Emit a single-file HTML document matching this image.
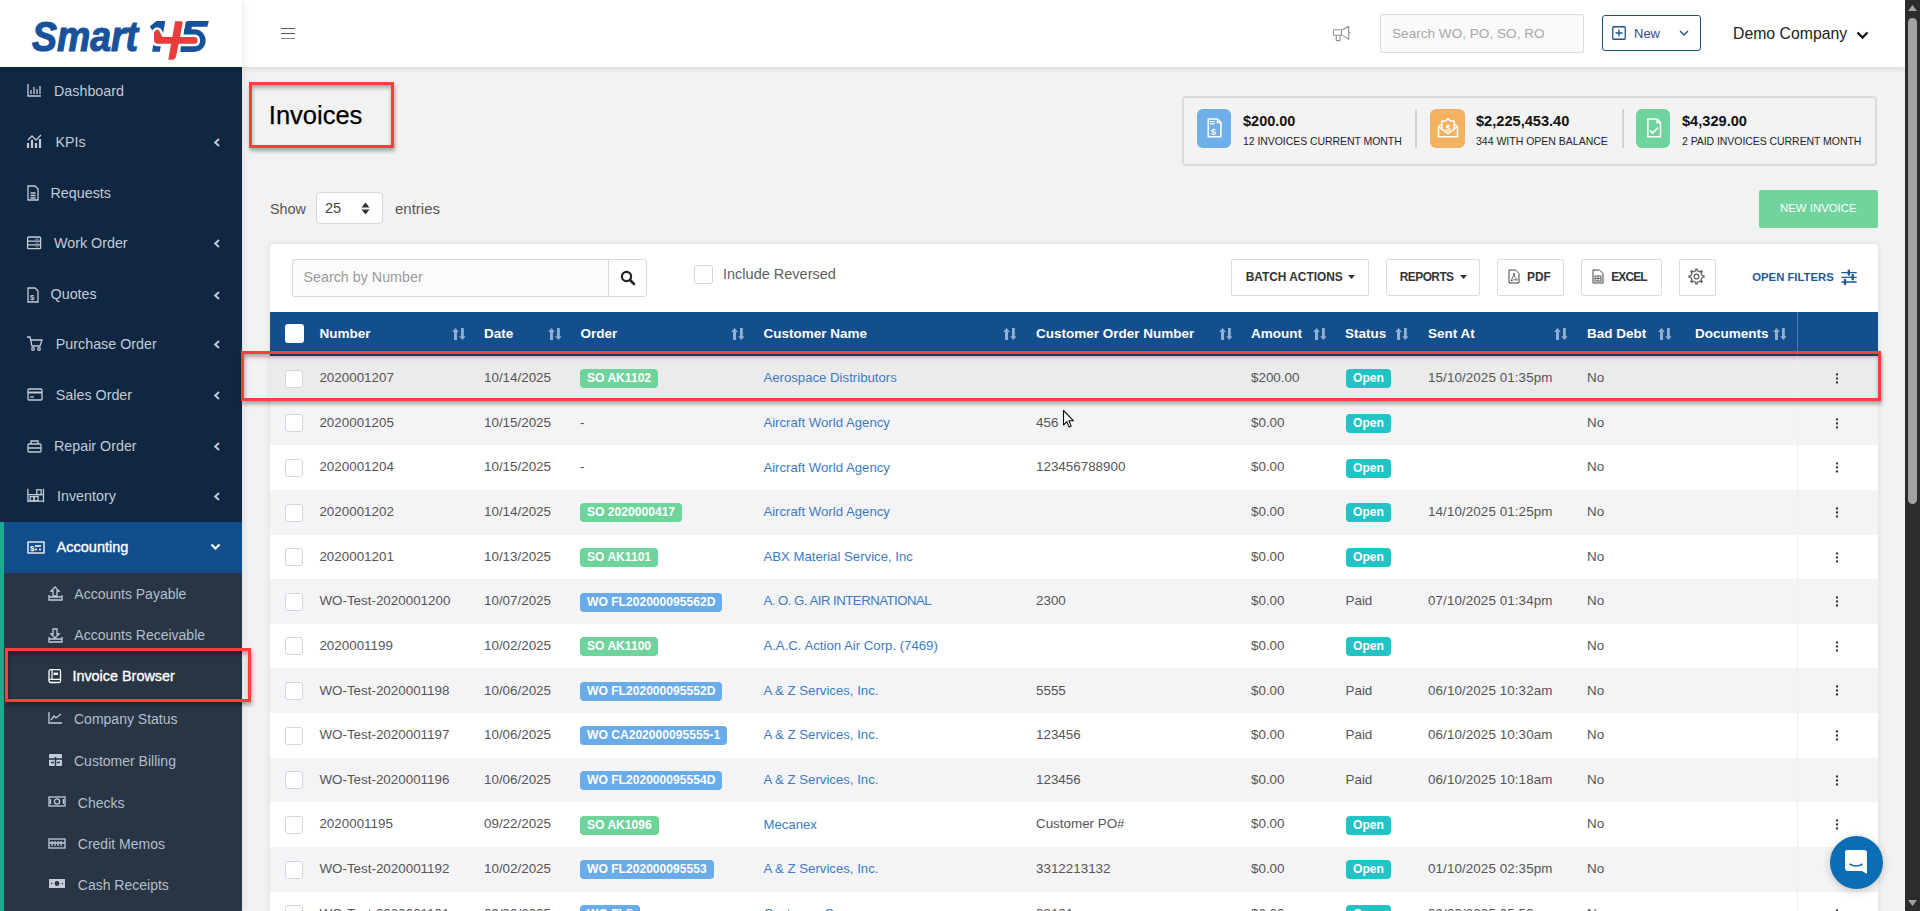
<!DOCTYPE html>
<html><head><meta charset="utf-8"><title>Invoices</title><style>
*{margin:0;padding:0;box-sizing:border-box}
html,body{width:1920px;height:911px;overflow:hidden;background:#f2f2f2;font-family:"Liberation Sans",sans-serif}
.t{position:absolute;white-space:nowrap;line-height:1}
.ic{position:absolute;overflow:visible}
#sb{position:absolute;left:0;top:0;width:242px;height:911px;background:#0f2740;box-shadow:1px 0 9px rgba(0,0,0,0.09)}
#logo{position:absolute;left:0;top:0;width:242px;height:67px;background:#fff}
#hdr{position:absolute;left:242px;top:0;width:1663px;height:67px;background:#fff;box-shadow:0 1px 6px rgba(0,0,0,0.12)}
.sico{position:absolute;top:109px;width:34px;height:39px;border-radius:6px}
.sico svg{position:absolute;left:0;top:0}
#card{position:absolute;left:270px;top:244px;width:1608px;height:700px;background:#fff;border-radius:3px;box-shadow:0 0 7px rgba(0,0,0,0.09)}
.btn{position:absolute;top:259px;height:37px;border:1px solid #dcdcdc;border-radius:2px;background:#fff}
.badge{position:absolute;height:19px;line-height:19px;padding:0 7px;border-radius:4px;color:#fff;font-weight:bold;font-size:12.1px;white-space:nowrap}
.ann{position:absolute;border:3px solid #ff3d3d;box-shadow:0.5px 3px 4px rgba(0,0,0,0.33), inset 0.5px 3px 4px rgba(0,0,0,0.3)}
</style></head>
<body>
<div id="hdr"></div>
<div id="sb"></div>
<div id="logo"></div>
<div class="t" style="left:0px;top:-0.85px;font-size:1px;color:#555;font-weight:normal;"></div>
<svg style="position:absolute;left:0;top:0" width="242" height="67" viewBox="0 0 242 67">
<text x="32" y="50.8" font-family="Liberation Sans" font-weight="bold" font-style="italic" font-size="42.5" fill="#17529a" stroke="#17529a" stroke-width="1.2" textLength="106" lengthAdjust="spacingAndGlyphs">Smart</text>
<path d="M149.9 26.3 L156.5 21 H165.3 L159.8 51.8 H152.1 L156 28.2 L152.4 31 Z" fill="#17529a"/>
<path d="M185.6 22.5 Q186 21 187.8 21 H208.9 L207.3 26.8 H191.9 L190.8 32.5 L183.4 34.8 Z" fill="#17529a"/>
<path d="M184 32.2 H194.35 A8.4 8.4 0 0 1 194.35 49 H180.5" stroke="#17529a" stroke-width="5.8" fill="none"/>
<g stroke="#fff" stroke-width="5" stroke-linejoin="round">
<path d="M155.5 30.5 Q157.5 29 159 30.5 L162.5 37 H194 Q197.5 37 197.5 40.4 Q197.5 43.8 194 43.8 H158 Q154 43.8 154 40 V33 Q154 31.5 155.5 30.5 Z" fill="#fff"/>
<path d="M175.1 21.3 H181 Q183 21.3 182.6 23.5 L176 56.7 Q175 59.8 172 59.8 H168.3 Z" fill="#fff"/>
</g>
<path d="M155.5 30.5 Q157.5 29 159 30.5 L162.5 37 H194 Q197.5 37 197.5 40.4 Q197.5 43.8 194 43.8 H158 Q154 43.8 154 40 V33 Q154 31.5 155.5 30.5 Z" fill="#e93c3c"/>
<path d="M175.1 21.3 H181 Q183 21.3 182.6 23.5 L176 56.7 Q175 59.8 172 59.8 H168.3 Z" fill="#e93c3c"/>
</svg>
<svg class="ic" style="left:27px;top:83px" width="18" height="16" viewBox="0 0 18 16"><path d="M1 1 V13 H14" stroke="#c3cbd6" stroke-width="1.3" fill="none"/><path d="M4 11 V7 M7 11 V4 M10 11 V6 M13 11 V3" stroke="#c3cbd6" stroke-width="1.3" fill="none"/></svg>
<div class="t" style="left:54px;top:83.90px;font-size:14.3px;color:#c3cbd6;font-weight:normal;">Dashboard</div>
<svg class="ic" style="left:27px;top:134px" width="18" height="16" viewBox="0 0 18 16"><path d="M1 14 V9 M5 14 V6 M9 14 V9 M13 14 V5" stroke="#c3cbd6" stroke-width="2.2"/><path d="M1 6 L5 2 L9 6 L14 1" stroke="#c3cbd6" stroke-width="1.3" fill="none"/></svg>
<div class="t" style="left:55.5px;top:134.90px;font-size:14.3px;color:#c3cbd6;font-weight:normal;">KPIs</div>
<svg class="ic" style="left:213px;top:138px" width="8" height="9" viewBox="0 0 8 9"><path d="M6 1 L2.2 4.5 L6 8" stroke="#c3cbd6" stroke-width="2" fill="none"/></svg>
<svg class="ic" style="left:27px;top:185px" width="18" height="16" viewBox="0 0 18 16"><path d="M1 1 H8 L11 4 V15 H1 Z" stroke="#c3cbd6" stroke-width="1.3" fill="none"/><path d="M3.5 8 H8.5 M3.5 10.5 H8.5 M3.5 13 H8.5" stroke="#c3cbd6" stroke-width="1.3" fill="none"/></svg>
<div class="t" style="left:50.5px;top:185.90px;font-size:14.3px;color:#c3cbd6;font-weight:normal;">Requests</div>
<svg class="ic" style="left:27px;top:235px" width="18" height="16" viewBox="0 0 18 16"><rect x="0.6" y="2" width="13" height="11.7" rx="1" stroke="#c3cbd6" stroke-width="1.3" fill="none"/><path d="M0.6 6.2 H13.6 M0.6 9.9 H13.6" stroke="#c3cbd6" stroke-width="1.3" fill="none"/><path d="M8.5 4.1 H11.5 M8.5 8 H11.5 M8.5 11.8 H11.5" stroke="#c3cbd6" stroke-width="1.1" stroke-dasharray="1 1"/></svg>
<div class="t" style="left:54px;top:235.90px;font-size:14.3px;color:#c3cbd6;font-weight:normal;">Work Order</div>
<svg class="ic" style="left:213px;top:239px" width="8" height="9" viewBox="0 0 8 9"><path d="M6 1 L2.2 4.5 L6 8" stroke="#c3cbd6" stroke-width="2" fill="none"/></svg>
<svg class="ic" style="left:27px;top:286.5px" width="18" height="16" viewBox="0 0 18 16"><path d="M1 1 H8 L11 4 V15 H1 Z" stroke="#c3cbd6" stroke-width="1.3" fill="none"/><text x="3" y="13" font-size="8" font-family="Liberation Sans" font-weight="bold" fill="#c3cbd6">$</text></svg>
<div class="t" style="left:50.6px;top:287.40px;font-size:14.3px;color:#c3cbd6;font-weight:normal;">Quotes</div>
<svg class="ic" style="left:213px;top:290.5px" width="8" height="9" viewBox="0 0 8 9"><path d="M6 1 L2.2 4.5 L6 8" stroke="#c3cbd6" stroke-width="2" fill="none"/></svg>
<svg class="ic" style="left:27px;top:336.3px" width="18" height="16" viewBox="0 0 18 16"><path d="M0 1 H3 L5 10 H13 L15 4 H4" stroke="#c3cbd6" stroke-width="1.3" fill="none"/><circle cx="6" cy="13" r="1.3" stroke="#c3cbd6" stroke-width="1.3" fill="none"/><circle cx="12" cy="13" r="1.3" stroke="#c3cbd6" stroke-width="1.3" fill="none"/></svg>
<div class="t" style="left:55.8px;top:337.20px;font-size:14.3px;color:#c3cbd6;font-weight:normal;">Purchase Order</div>
<svg class="ic" style="left:213px;top:340.3px" width="8" height="9" viewBox="0 0 8 9"><path d="M6 1 L2.2 4.5 L6 8" stroke="#c3cbd6" stroke-width="2" fill="none"/></svg>
<svg class="ic" style="left:27px;top:387.2px" width="18" height="16" viewBox="0 0 18 16"><rect x="1" y="2" width="14" height="11" rx="1" stroke="#c3cbd6" stroke-width="1.3" fill="none"/><path d="M1 5.5 H15" stroke="#c3cbd6" stroke-width="2"/><path d="M3 10 H7" stroke="#c3cbd6" stroke-width="1.3" fill="none"/></svg>
<div class="t" style="left:55.8px;top:388.10px;font-size:14.3px;color:#c3cbd6;font-weight:normal;">Sales Order</div>
<svg class="ic" style="left:213px;top:391.2px" width="8" height="9" viewBox="0 0 8 9"><path d="M6 1 L2.2 4.5 L6 8" stroke="#c3cbd6" stroke-width="2" fill="none"/></svg>
<svg class="ic" style="left:27px;top:438px" width="18" height="16" viewBox="0 0 18 16"><rect x="1" y="6" width="13" height="8" rx="1" stroke="#c3cbd6" stroke-width="1.3" fill="none"/><path d="M4 6 V3 H11 V6 M1 10 H14" stroke="#c3cbd6" stroke-width="1.3" fill="none"/></svg>
<div class="t" style="left:54px;top:438.90px;font-size:14.3px;color:#c3cbd6;font-weight:normal;">Repair Order</div>
<svg class="ic" style="left:213px;top:442px" width="8" height="9" viewBox="0 0 8 9"><path d="M6 1 L2.2 4.5 L6 8" stroke="#c3cbd6" stroke-width="2" fill="none"/></svg>
<svg class="ic" style="left:27px;top:488.4px" width="18" height="16" viewBox="0 0 18 16"><path d="M0.9 0.8 V14.3 M16.5 0.8 V14.3 M0.9 6.6 H16.5 M0.9 13.1 H16.5" stroke="#c3cbd6" stroke-width="1.3" fill="none"/><rect x="9.8" y="1.8" width="4.4" height="4.8" stroke="#c3cbd6" stroke-width="1.3" fill="none"/><rect x="3.2" y="8.6" width="3.8" height="4.2" stroke="#c3cbd6" stroke-width="1.3" fill="none"/><rect x="7.3" y="8.6" width="3.8" height="4.2" stroke="#c3cbd6" stroke-width="1.3" fill="none"/></svg>
<div class="t" style="left:57px;top:489.30px;font-size:14.3px;color:#c3cbd6;font-weight:normal;">Inventory</div>
<svg class="ic" style="left:213px;top:492.4px" width="8" height="9" viewBox="0 0 8 9"><path d="M6 1 L2.2 4.5 L6 8" stroke="#c3cbd6" stroke-width="2" fill="none"/></svg>
<div style="position:absolute;left:0;top:522px;width:242px;height:51px;background:#124e8b"></div>
<div style="position:absolute;left:4px;top:573px;width:238px;height:338px;background:#283544"></div>
<div style="position:absolute;left:0;top:522px;width:4px;height:389px;background:#1aad8c"></div>
<svg class="ic" style="left:27px;top:541px" width="18" height="16" viewBox="0 0 18 16"><rect x="1" y="1" width="16" height="11" stroke="#fff" stroke-width="1.3" fill="none"/><text x="3" y="10" font-size="8" font-weight="bold" font-family="Liberation Sans" fill="#fff">$</text><path d="M8 5 H14 M8 8.5 H10 M12 8.5 H14" stroke="#fff" stroke-width="1.3"/></svg>
<div class="t" style="left:56.6px;top:539.73px;font-size:14.5px;color:#fff;font-weight:normal;-webkit-text-stroke:0.35px #fff">Accounting</div>
<svg class="ic" style="left:210px;top:543px" width="11" height="8" viewBox="0 0 11 8"><path d="M1.5 1.5 L5.5 5.5 L9.5 1.5" stroke="#fff" stroke-width="2.2" fill="none"/></svg>
<svg class="ic" style="left:47.5px;top:586.1px" width="18" height="16" viewBox="0 0 18 16"><path d="M7 1 L11 5 H9 V10 H5 V5 H3 Z" stroke="#c3cbd6" stroke-width="1.3" fill="none"/><path d="M1 9 V14 H14 V9 M1 11 H14" stroke="#c3cbd6" stroke-width="1.3" fill="none"/></svg>
<div class="t" style="left:74.3px;top:586.75px;font-size:14px;color:#b5bfcb;font-weight:normal;">Accounts Payable</div>
<svg class="ic" style="left:47.5px;top:627.7px" width="18" height="16" viewBox="0 0 18 16"><path d="M7 10 L11 6 H9 V1 H5 V6 H3 Z" stroke="#c3cbd6" stroke-width="1.3" fill="none"/><path d="M1 9 V14 H14 V9 M1 11 H14" stroke="#c3cbd6" stroke-width="1.3" fill="none"/></svg>
<div class="t" style="left:74.3px;top:628.35px;font-size:14px;color:#b5bfcb;font-weight:normal;">Accounts Receivable</div>
<svg class="ic" style="left:47.5px;top:669.0px" width="18" height="16" viewBox="0 0 18 16"><rect x="1" y="0.7" width="11.5" height="12.8" rx="1.5" stroke="#fff" stroke-width="1.3" fill="none"/><path d="M4 0.7 V10.3 M1 10.3 H12.5" stroke="#fff" stroke-width="1.2"/><rect x="5.5" y="3.6" width="4.5" height="2.4" fill="#fff"/></svg>
<div class="t" style="left:72.4px;top:669.31px;font-size:14.4px;color:#fff;font-weight:normal;-webkit-text-stroke:0.35px #fff">Invoice Browser</div>
<svg class="ic" style="left:47.5px;top:711.0px" width="18" height="16" viewBox="0 0 18 16"><path d="M1 1 V12 H14" stroke="#c3cbd6" stroke-width="1.3" fill="none"/><path d="M3 9 L6 5 L8 7 L13 3" stroke="#c3cbd6" stroke-width="1.3" fill="none"/></svg>
<div class="t" style="left:74px;top:711.65px;font-size:14px;color:#b5bfcb;font-weight:normal;">Company Status</div>
<svg class="ic" style="left:47.5px;top:753.1px" width="18" height="16" viewBox="0 0 18 16"><rect x="1" y="1" width="13" height="12" rx="1" fill="#c3cbd6"/><path d="M1 6 H14 M7.5 4 V13 M3 9.5 H6 M9 9.5 H12" stroke="#283544" stroke-width="1.5"/></svg>
<div class="t" style="left:74px;top:753.75px;font-size:14px;color:#b5bfcb;font-weight:normal;">Customer Billing</div>
<svg class="ic" style="left:47.5px;top:795.0px" width="18" height="16" viewBox="0 0 18 16"><rect x="1" y="2" width="16" height="9" stroke="#c3cbd6" stroke-width="1.3" fill="none"/><circle cx="9" cy="6.5" r="2.6" stroke="#c3cbd6" stroke-width="1.3" fill="none"/><path d="M2.5 4 V9 M15.5 4 V9" stroke="#c3cbd6" stroke-width="1.3" fill="none"/></svg>
<div class="t" style="left:77.8px;top:795.65px;font-size:14px;color:#b5bfcb;font-weight:normal;">Checks</div>
<svg class="ic" style="left:47.5px;top:836.8px" width="18" height="16" viewBox="0 0 18 16"><rect x="1" y="2" width="16" height="9" stroke="#c3cbd6" stroke-width="1.3" fill="none"/><path d="M4 4 V9 M7 4 V9 M10 4 V9 M13 4 V9 M1 6 H17" stroke="#c3cbd6" stroke-width="1.3" fill="none"/></svg>
<div class="t" style="left:77.8px;top:837.45px;font-size:14px;color:#b5bfcb;font-weight:normal;">Credit Memos</div>
<svg class="ic" style="left:47.5px;top:877.4px" width="18" height="16" viewBox="0 0 18 16"><rect x="1" y="2" width="16" height="9" fill="#c3cbd6"/><circle cx="9" cy="6.5" r="2.4" fill="#283544"/><circle cx="3.5" cy="6.5" r="0.8" fill="#283544"/><circle cx="14.5" cy="6.5" r="0.8" fill="#283544"/></svg>
<div class="t" style="left:77.8px;top:878.05px;font-size:14px;color:#b5bfcb;font-weight:normal;">Cash Receipts</div>
<div style="position:absolute;left:281px;top:28px;width:14px;height:1px;background:#555"></div>
<div style="position:absolute;left:281px;top:33px;width:14px;height:1px;background:#555"></div>
<div style="position:absolute;left:281px;top:38px;width:14px;height:1px;background:#888"></div>
<svg class="ic" style="left:1332px;top:25px" width="20" height="17" viewBox="0 0 20 17"><path d="M2 4.8 H9.5 Q12.5 4.5 16.7 1.3 V14.3 Q12.5 11 9.5 10.3 H2 Q1.5 10.3 1.5 9.8 V5.3 Q1.5 4.8 2 4.8 Z M9.5 4.8 V10.3 M4.2 10.3 V15.2 Q4.2 15.6 4.6 15.6 H7.6 Q8 15.6 8 15.2 V10.3" stroke="#909090" stroke-width="1.1" fill="none" stroke-linejoin="round"/><path d="M17.8 7 V8.6" stroke="#909090" stroke-width="1.2"/></svg>
<div style="position:absolute;left:1380px;top:14px;width:204px;height:39px;border:1px solid #dcdcdc;background:#fafafa;border-radius:2px"></div>
<div class="t" style="left:1392px;top:26.99px;font-size:13.6px;color:#a8a8a8;font-weight:normal;">Search WO, PO, SO, RO</div>
<div style="position:absolute;left:1602px;top:15px;width:99px;height:36px;border:1.5px solid #1f4f8a;border-radius:3px;background:#fff"></div>
<svg class="ic" style="left:1612px;top:26px" width="14" height="14" viewBox="0 0 14 14"><rect x="0.75" y="0.75" width="12.5" height="12.5" rx="1" stroke="#1f4f8a" stroke-width="1.3" fill="none"/><path d="M7 3.5 V10.5 M3.5 7 H10.5" stroke="#1f4f8a" stroke-width="1.3"/></svg>
<div class="t" style="left:1634px;top:27.00px;font-size:13px;color:#1f4f8a;font-weight:normal;">New</div>
<svg class="ic" style="left:1679px;top:30px" width="10" height="6" viewBox="0 0 10 6"><path d="M1 1 L5 5 L9 1" stroke="#1f4f8a" stroke-width="1.3" fill="none"/></svg>
<div class="t" style="left:1733px;top:26.13px;font-size:15.8px;color:#222;font-weight:normal;">Demo Company</div>
<svg class="ic" style="left:1856px;top:31px" width="13" height="9" viewBox="0 0 13 9"><path d="M1.5 1.5 L6.5 6.5 L11.5 1.5" stroke="#111" stroke-width="2.3" fill="none"/></svg>
<div class="t" style="left:268.8px;top:102.91px;font-size:25.5px;color:#000;font-weight:normal;-webkit-text-stroke:0.25px #000">Invoices</div>
<div style="position:absolute;left:1182px;top:96px;width:695px;height:70px;border:2px solid #dadada;border-radius:4px;background:#f3f3f3"></div>
<div style="position:absolute;left:1415px;top:109px;width:2px;height:39px;background:#d3d3d3"></div>
<div style="position:absolute;left:1622px;top:109px;width:2px;height:39px;background:#d3d3d3"></div>
<div class="sico" style="left:1197px;background:#6eaeea"><svg width="34" height="39" viewBox="0 0 34 39"><path d="M11.3 10 H20.3 L23.9 13.6 V27.7 H11.3 Z" stroke="#fff" stroke-width="1.6" fill="none" stroke-linejoin="round"/><path d="M20.3 10 V13.6 H23.9" stroke="#fff" stroke-width="1.4" fill="none"/><path d="M13 12.6 H17.7 M13 14.9 H17.7" stroke="#fff" stroke-width="1.4"/><text x="14.6" y="25.6" font-size="9.5" font-weight="bold" font-family="Liberation Sans" fill="#fff" text-anchor="middle" transform="translate(1.9,0)">$</text></svg></div>
<div class="sico" style="left:1430px;width:35px;background:#f4b260"><svg width="35" height="39" viewBox="0 0 35 39"><path d="M8.5 17.5 V27.7 H27.5 V17.5" stroke="#fff" stroke-width="1.6" fill="none" stroke-linejoin="round"/><path d="M8.5 17.5 L18 24.6 L27.5 17.5 L25 15.5 M8.5 17.5 L11 15.5" stroke="#fff" stroke-width="1.5" fill="none" stroke-linejoin="round"/><path d="M11.8 21 V12 H15.5 L18 9.7 L20.5 12 H24.2 V21" stroke="#fff" stroke-width="1.5" fill="none" stroke-linejoin="round"/><text x="18" y="21.5" font-size="8.5" font-weight="bold" font-family="Liberation Sans" fill="#fff" text-anchor="middle">$</text></svg></div>
<div class="sico" style="left:1636px;background:#6fd49b"><svg width="34" height="39" viewBox="0 0 34 39"><path d="M11.8 10 H21 L24.5 13.6 V27.7 H11.8 Z" stroke="#fff" stroke-width="1.6" fill="none" stroke-linejoin="round"/><path d="M21 10 V13.6 H24.5" stroke="#fff" stroke-width="1.4" fill="none"/><path d="M14 21.4 L16.7 24 L22 18.5" stroke="#fff" stroke-width="1.6" fill="none"/></svg></div>
<div class="t" style="left:1243px;top:113.73px;font-size:14.5px;color:#111;font-weight:bold;">$200.00</div>
<div class="t" style="left:1243px;top:136.11px;font-size:10.5px;color:#1e1e28;font-weight:normal;letter-spacing:-0.06px">12 INVOICES CURRENT MONTH</div>
<div class="t" style="left:1476px;top:113.64px;font-size:14.6px;color:#111;font-weight:bold;">$2,225,453.40</div>
<div class="t" style="left:1476px;top:136.11px;font-size:10.5px;color:#1e1e28;font-weight:normal;">344 WITH OPEN BALANCE</div>
<div class="t" style="left:1682px;top:113.64px;font-size:14.6px;color:#111;font-weight:bold;">$4,329.00</div>
<div class="t" style="left:1682px;top:136.11px;font-size:10.5px;color:#1e1e28;font-weight:normal;letter-spacing:-0.06px">2 PAID INVOICES CURRENT MONTH</div>
<div class="t" style="left:270px;top:201.81px;font-size:14.4px;color:#555;font-weight:normal;">Show</div>
<div style="position:absolute;left:316px;top:192px;width:67px;height:32px;border:1px solid #d6d6d6;border-radius:4px;background:#fff"></div>
<div class="t" style="left:325px;top:200.73px;font-size:14.5px;color:#444;font-weight:normal;">25</div>
<svg class="ic" style="left:361px;top:202px" width="9" height="13" viewBox="0 0 9 13"><path d="M0.5 5.5 L4.5 0.5 L8.5 5.5 Z M0.5 7.5 L4.5 12.5 L8.5 7.5 Z" fill="#333"/></svg>
<div class="t" style="left:395px;top:201.30px;font-size:15px;color:#555;font-weight:normal;">entries</div>
<div style="position:absolute;left:1759px;top:190px;width:119px;height:38px;background:#70d49b;border-radius:2px"></div>
<div class="t" style="left:1780px;top:203.35px;font-size:11.4px;color:#fff;font-weight:normal;">NEW INVOICE</div>
<div id="card"></div>
<div style="position:absolute;left:292px;top:259px;width:317px;height:38px;border:1px solid #d9d9d9;border-right:none;border-radius:3px 0 0 3px;background:#fbfbfb"></div>
<div style="position:absolute;left:608px;top:259px;width:39px;height:38px;border:1px solid #d9d9d9;border-radius:0 3px 3px 0;background:#fff"></div>
<div class="t" style="left:303.5px;top:269.90px;font-size:14.3px;color:#9a9a9a;font-weight:normal;">Search by Number</div>
<svg class="ic" style="left:620px;top:270px" width="16" height="16" viewBox="0 0 16 16"><circle cx="6.5" cy="6.5" r="4.6" stroke="#222" stroke-width="2.2" fill="none"/><path d="M10 10 L14 14" stroke="#222" stroke-width="2.6" stroke-linecap="round"/></svg>
<div style="position:absolute;left:694px;top:265px;width:19px;height:19px;border:1px solid #cfd5dc;border-radius:3px;background:#fff"></div>
<div class="t" style="left:723px;top:266.73px;font-size:14.5px;color:#5f5f5f;font-weight:normal;">Include Reversed</div>
<div class="btn" style="left:1231px;width:138px"></div><div class="t" style="left:1245.7px;top:271.93px;font-size:11.9px;color:#333;font-weight:bold;letter-spacing:0px">BATCH ACTIONS</div><svg class="ic" style="left:1348px;top:275px" width="7" height="4" viewBox="0 0 7 4"><path d="M0 0 H7 L3.5 4 Z" fill="#333"/></svg>
<div class="btn" style="left:1386px;width:94px"></div><div class="t" style="left:1399.8px;top:271.93px;font-size:11.9px;color:#333;font-weight:bold;letter-spacing:-0.54px">REPORTS</div><svg class="ic" style="left:1460px;top:275px" width="7" height="4" viewBox="0 0 7 4"><path d="M0 0 H7 L3.5 4 Z" fill="#333"/></svg>
<div class="btn" style="left:1497px;width:67px"></div><div class="t" style="left:1527px;top:271.93px;font-size:11.9px;color:#333;font-weight:bold;letter-spacing:0px">PDF</div><svg class="ic" style="left:1508px;top:269px" width="12" height="15" viewBox="0 0 12 15"><path d="M1 1 H7.5 L11 4.5 V14 H1 Z" stroke="#444" stroke-width="1" fill="none"/><path d="M3 12 Q6 6 6 4 Q6 9 9.5 11 Q5 10 3 12" stroke="#444" stroke-width="0.8" fill="none"/></svg>
<div class="btn" style="left:1581px;width:81px"></div><div class="t" style="left:1611.2px;top:271.93px;font-size:11.9px;color:#333;font-weight:bold;letter-spacing:-0.8px">EXCEL</div><svg class="ic" style="left:1592px;top:269px" width="12" height="15" viewBox="0 0 12 15"><path d="M1 1 H7.5 L11 4.5 V14 H1 Z" stroke="#444" stroke-width="1" fill="none"/><rect x="3" y="7" width="6" height="5" stroke="#444" stroke-width="0.9" fill="none"/><path d="M3 9.5 H9 M6 7 V12" stroke="#444" stroke-width="0.8"/></svg>
<div class="btn" style="left:1679px;width:37px"></div>
<svg class="ic" style="left:1688px;top:268px" width="17" height="17" viewBox="0 0 17 17"><path d="M14.04 7.71 L16.07 7.78 L16.07 9.22 L14.04 9.29 L13.67 10.64 L12.98 11.86 L14.36 13.34 L13.34 14.36 L11.86 12.98 L10.64 13.67 L9.29 14.04 L9.22 16.07 L7.78 16.07 L7.71 14.04 L6.36 13.67 L5.14 12.98 L3.66 14.36 L2.64 13.34 L4.02 11.86 L3.33 10.64 L2.96 9.29 L0.93 9.22 L0.93 7.78 L2.96 7.71 L3.33 6.36 L4.02 5.14 L2.64 3.66 L3.66 2.64 L5.14 4.02 L6.36 3.33 L7.71 2.96 L7.78 0.93 L9.22 0.93 L9.29 2.96 L10.64 3.33 L11.86 4.02 L13.34 2.64 L14.36 3.66 L12.98 5.14 L13.67 6.36 Z" stroke="#555" stroke-width="1.1" fill="none" stroke-linejoin="round"/><circle cx="8.5" cy="8.5" r="2.4" stroke="#555" stroke-width="1.1" fill="none"/></svg>
<div class="t" style="left:1752.3px;top:272.43px;font-size:11.3px;color:#1f5a96;font-weight:bold;">OPEN FILTERS</div>
<svg class="ic" style="left:1840px;top:268px" width="18" height="17" viewBox="0 0 18 17"><path d="M1.4 4.6 H16.7 M1.4 9.3 H16.7 M1.4 14 H16.7" stroke="#1f5a96" stroke-width="1.3"/><path d="M8.8 2.6 V6.6 M12.7 7.3 V11.3 M5 12 V16" stroke="#1f5a96" stroke-width="2.4" stroke-linecap="round"/></svg>
<div style="position:absolute;left:270px;top:312px;width:1608px;height:44px;background:#134f8d"></div>
<div style="position:absolute;left:1797px;top:312px;width:1px;height:44px;background:rgba(255,255,255,0.25)"></div>
<div style="position:absolute;left:285px;top:324px;width:19px;height:19px;background:#fff;border-radius:3px"></div>
<div class="t" style="left:319.5px;top:326.57px;font-size:13.5px;color:#fff;font-weight:bold;">Number</div>
<svg class="ic" style="left:451.5px;top:327px" width="14" height="14" viewBox="0 0 14 14"><path d="M0.2 4.9 L3.5 1 L6.8 4.9 H5 V13 H2 V4.9 Z" fill="#93afd0"/><path d="M9 1 H11.8 V9.3 H13.6 L10.4 13 L7.2 9.3 H9 Z" fill="#93afd0"/></svg>
<div class="t" style="left:484px;top:326.57px;font-size:13.5px;color:#fff;font-weight:bold;">Date</div>
<svg class="ic" style="left:548px;top:327px" width="14" height="14" viewBox="0 0 14 14"><path d="M0.2 4.9 L3.5 1 L6.8 4.9 H5 V13 H2 V4.9 Z" fill="#93afd0"/><path d="M9 1 H11.8 V9.3 H13.6 L10.4 13 L7.2 9.3 H9 Z" fill="#93afd0"/></svg>
<div class="t" style="left:580.4px;top:326.57px;font-size:13.5px;color:#fff;font-weight:bold;">Order</div>
<svg class="ic" style="left:731px;top:327px" width="14" height="14" viewBox="0 0 14 14"><path d="M0.2 4.9 L3.5 1 L6.8 4.9 H5 V13 H2 V4.9 Z" fill="#93afd0"/><path d="M9 1 H11.8 V9.3 H13.6 L10.4 13 L7.2 9.3 H9 Z" fill="#93afd0"/></svg>
<div class="t" style="left:763.5px;top:326.57px;font-size:13.5px;color:#fff;font-weight:bold;">Customer Name</div>
<svg class="ic" style="left:1003px;top:327px" width="14" height="14" viewBox="0 0 14 14"><path d="M0.2 4.9 L3.5 1 L6.8 4.9 H5 V13 H2 V4.9 Z" fill="#93afd0"/><path d="M9 1 H11.8 V9.3 H13.6 L10.4 13 L7.2 9.3 H9 Z" fill="#93afd0"/></svg>
<div class="t" style="left:1036px;top:326.57px;font-size:13.5px;color:#fff;font-weight:bold;">Customer Order Number</div>
<svg class="ic" style="left:1219px;top:327px" width="14" height="14" viewBox="0 0 14 14"><path d="M0.2 4.9 L3.5 1 L6.8 4.9 H5 V13 H2 V4.9 Z" fill="#93afd0"/><path d="M9 1 H11.8 V9.3 H13.6 L10.4 13 L7.2 9.3 H9 Z" fill="#93afd0"/></svg>
<div class="t" style="left:1251px;top:326.57px;font-size:13.5px;color:#fff;font-weight:bold;">Amount</div>
<svg class="ic" style="left:1313px;top:327px" width="14" height="14" viewBox="0 0 14 14"><path d="M0.2 4.9 L3.5 1 L6.8 4.9 H5 V13 H2 V4.9 Z" fill="#93afd0"/><path d="M9 1 H11.8 V9.3 H13.6 L10.4 13 L7.2 9.3 H9 Z" fill="#93afd0"/></svg>
<div class="t" style="left:1345px;top:326.57px;font-size:13.5px;color:#fff;font-weight:bold;">Status</div>
<svg class="ic" style="left:1395px;top:327px" width="14" height="14" viewBox="0 0 14 14"><path d="M0.2 4.9 L3.5 1 L6.8 4.9 H5 V13 H2 V4.9 Z" fill="#93afd0"/><path d="M9 1 H11.8 V9.3 H13.6 L10.4 13 L7.2 9.3 H9 Z" fill="#93afd0"/></svg>
<div class="t" style="left:1428px;top:326.57px;font-size:13.5px;color:#fff;font-weight:bold;">Sent At</div>
<svg class="ic" style="left:1554px;top:327px" width="14" height="14" viewBox="0 0 14 14"><path d="M0.2 4.9 L3.5 1 L6.8 4.9 H5 V13 H2 V4.9 Z" fill="#93afd0"/><path d="M9 1 H11.8 V9.3 H13.6 L10.4 13 L7.2 9.3 H9 Z" fill="#93afd0"/></svg>
<div class="t" style="left:1587px;top:326.57px;font-size:13.5px;color:#fff;font-weight:bold;">Bad Debt</div>
<svg class="ic" style="left:1658px;top:327px" width="14" height="14" viewBox="0 0 14 14"><path d="M0.2 4.9 L3.5 1 L6.8 4.9 H5 V13 H2 V4.9 Z" fill="#93afd0"/><path d="M9 1 H11.8 V9.3 H13.6 L10.4 13 L7.2 9.3 H9 Z" fill="#93afd0"/></svg>
<div class="t" style="left:1695px;top:326.57px;font-size:13.5px;color:#fff;font-weight:bold;">Documents</div>
<svg class="ic" style="left:1773px;top:327px" width="14" height="14" viewBox="0 0 14 14"><path d="M0.2 4.9 L3.5 1 L6.8 4.9 H5 V13 H2 V4.9 Z" fill="#93afd0"/><path d="M9 1 H11.8 V9.3 H13.6 L10.4 13 L7.2 9.3 H9 Z" fill="#93afd0"/></svg>
<div style="position:absolute;left:270px;top:356.00px;width:1608px;height:45.14px;background:#ebebeb"></div>
<div style="position:absolute;left:285px;top:369.60px;width:18px;height:18px;border:1px solid #cfd6de;border-radius:3px;background:#fff"></div>
<div class="t" style="left:319.4px;top:371.06px;font-size:13.4px;color:#555;font-weight:normal;">2020001207</div>
<div class="t" style="left:484px;top:371.06px;font-size:13.4px;color:#555;font-weight:normal;">10/14/2025</div>
<div class="badge" style="left:580px;top:369.30px;background:#6fd49b">SO AK1102</div>
<div class="t" style="left:763.4px;top:371.23px;font-size:13.2px;color:#3c7bc4;font-weight:normal;">Aerospace Distributors</div>
<div class="t" style="left:1251px;top:371.06px;font-size:13.4px;color:#555;font-weight:normal;">$200.00</div>
<div class="badge" style="left:1346px;top:369.30px;background:#22c3c4">Open</div>
<div class="t" style="left:1428px;top:371.06px;font-size:13.4px;color:#555;font-weight:normal;letter-spacing:0.09px">15/10/2025 01:35pm</div>
<div class="t" style="left:1587px;top:371.06px;font-size:13.4px;color:#555;font-weight:normal;">No</div>
<svg class="ic" style="left:1835px;top:373.00px" width="4" height="12" viewBox="0 0 4 12"><circle cx="2" cy="1.5" r="1.15" fill="#333"/><circle cx="2" cy="5.5" r="1.15" fill="#333"/><circle cx="2" cy="9.5" r="1.15" fill="#333"/></svg>
<div style="position:absolute;left:270px;top:400.64px;width:1608px;height:45.14px;background:#f4f4f6"></div>
<div style="position:absolute;left:285px;top:414.24px;width:18px;height:18px;border:1px solid #cfd6de;border-radius:3px;background:#fff"></div>
<div class="t" style="left:319.4px;top:415.70px;font-size:13.4px;color:#555;font-weight:normal;">2020001205</div>
<div class="t" style="left:484px;top:415.70px;font-size:13.4px;color:#555;font-weight:normal;">10/15/2025</div>
<div class="t" style="left:580px;top:415.70px;font-size:13.4px;color:#555;font-weight:normal;">-</div>
<div class="t" style="left:763.4px;top:415.87px;font-size:13.2px;color:#3c7bc4;font-weight:normal;">Aircraft World Agency</div>
<div class="t" style="left:1036px;top:415.70px;font-size:13.4px;color:#555;font-weight:normal;">456</div>
<div class="t" style="left:1251px;top:415.70px;font-size:13.4px;color:#555;font-weight:normal;">$0.00</div>
<div class="badge" style="left:1346px;top:413.94px;background:#22c3c4">Open</div>
<div class="t" style="left:1587px;top:415.70px;font-size:13.4px;color:#555;font-weight:normal;">No</div>
<svg class="ic" style="left:1835px;top:417.64px" width="4" height="12" viewBox="0 0 4 12"><circle cx="2" cy="1.5" r="1.15" fill="#333"/><circle cx="2" cy="5.5" r="1.15" fill="#333"/><circle cx="2" cy="9.5" r="1.15" fill="#333"/></svg>
<div style="position:absolute;left:270px;top:445.28px;width:1608px;height:45.14px;background:#fff"></div>
<div style="position:absolute;left:285px;top:458.88px;width:18px;height:18px;border:1px solid #cfd6de;border-radius:3px;background:#fff"></div>
<div class="t" style="left:319.4px;top:460.34px;font-size:13.4px;color:#555;font-weight:normal;">2020001204</div>
<div class="t" style="left:484px;top:460.34px;font-size:13.4px;color:#555;font-weight:normal;">10/15/2025</div>
<div class="t" style="left:580px;top:460.34px;font-size:13.4px;color:#555;font-weight:normal;">-</div>
<div class="t" style="left:763.4px;top:460.51px;font-size:13.2px;color:#3c7bc4;font-weight:normal;">Aircraft World Agency</div>
<div class="t" style="left:1036px;top:460.34px;font-size:13.4px;color:#555;font-weight:normal;">123456788900</div>
<div class="t" style="left:1251px;top:460.34px;font-size:13.4px;color:#555;font-weight:normal;">$0.00</div>
<div class="badge" style="left:1346px;top:458.58px;background:#22c3c4">Open</div>
<div class="t" style="left:1587px;top:460.34px;font-size:13.4px;color:#555;font-weight:normal;">No</div>
<svg class="ic" style="left:1835px;top:462.28px" width="4" height="12" viewBox="0 0 4 12"><circle cx="2" cy="1.5" r="1.15" fill="#333"/><circle cx="2" cy="5.5" r="1.15" fill="#333"/><circle cx="2" cy="9.5" r="1.15" fill="#333"/></svg>
<div style="position:absolute;left:270px;top:489.92px;width:1608px;height:45.14px;background:#f4f4f6"></div>
<div style="position:absolute;left:285px;top:503.52px;width:18px;height:18px;border:1px solid #cfd6de;border-radius:3px;background:#fff"></div>
<div class="t" style="left:319.4px;top:504.98px;font-size:13.4px;color:#555;font-weight:normal;">2020001202</div>
<div class="t" style="left:484px;top:504.98px;font-size:13.4px;color:#555;font-weight:normal;">10/14/2025</div>
<div class="badge" style="left:580px;top:503.22px;background:#6fd49b">SO 2020000417</div>
<div class="t" style="left:763.4px;top:505.15px;font-size:13.2px;color:#3c7bc4;font-weight:normal;">Aircraft World Agency</div>
<div class="t" style="left:1251px;top:504.98px;font-size:13.4px;color:#555;font-weight:normal;">$0.00</div>
<div class="badge" style="left:1346px;top:503.22px;background:#22c3c4">Open</div>
<div class="t" style="left:1428px;top:504.98px;font-size:13.4px;color:#555;font-weight:normal;letter-spacing:0.09px">14/10/2025 01:25pm</div>
<div class="t" style="left:1587px;top:504.98px;font-size:13.4px;color:#555;font-weight:normal;">No</div>
<svg class="ic" style="left:1835px;top:506.92px" width="4" height="12" viewBox="0 0 4 12"><circle cx="2" cy="1.5" r="1.15" fill="#333"/><circle cx="2" cy="5.5" r="1.15" fill="#333"/><circle cx="2" cy="9.5" r="1.15" fill="#333"/></svg>
<div style="position:absolute;left:270px;top:534.56px;width:1608px;height:45.14px;background:#fff"></div>
<div style="position:absolute;left:285px;top:548.16px;width:18px;height:18px;border:1px solid #cfd6de;border-radius:3px;background:#fff"></div>
<div class="t" style="left:319.4px;top:549.62px;font-size:13.4px;color:#555;font-weight:normal;">2020001201</div>
<div class="t" style="left:484px;top:549.62px;font-size:13.4px;color:#555;font-weight:normal;">10/13/2025</div>
<div class="badge" style="left:580px;top:547.86px;background:#6fd49b">SO AK1101</div>
<div class="t" style="left:763.4px;top:549.79px;font-size:13.2px;color:#3c7bc4;font-weight:normal;">ABX Material Service, Inc</div>
<div class="t" style="left:1251px;top:549.62px;font-size:13.4px;color:#555;font-weight:normal;">$0.00</div>
<div class="badge" style="left:1346px;top:547.86px;background:#22c3c4">Open</div>
<div class="t" style="left:1587px;top:549.62px;font-size:13.4px;color:#555;font-weight:normal;">No</div>
<svg class="ic" style="left:1835px;top:551.56px" width="4" height="12" viewBox="0 0 4 12"><circle cx="2" cy="1.5" r="1.15" fill="#333"/><circle cx="2" cy="5.5" r="1.15" fill="#333"/><circle cx="2" cy="9.5" r="1.15" fill="#333"/></svg>
<div style="position:absolute;left:270px;top:579.20px;width:1608px;height:45.14px;background:#f4f4f6"></div>
<div style="position:absolute;left:285px;top:592.80px;width:18px;height:18px;border:1px solid #cfd6de;border-radius:3px;background:#fff"></div>
<div class="t" style="left:319.4px;top:594.26px;font-size:13.4px;color:#555;font-weight:normal;">WO-Test-2020001200</div>
<div class="t" style="left:484px;top:594.26px;font-size:13.4px;color:#555;font-weight:normal;">10/07/2025</div>
<div class="badge" style="left:580px;top:592.50px;background:#6aabea">WO FL202000095562D</div>
<div class="t" style="left:763.4px;top:594.43px;font-size:13.2px;color:#3c7bc4;font-weight:normal;letter-spacing:-0.5px">A. O. G. AIR INTERNATIONAL</div>
<div class="t" style="left:1036px;top:594.26px;font-size:13.4px;color:#555;font-weight:normal;">2300</div>
<div class="t" style="left:1251px;top:594.26px;font-size:13.4px;color:#555;font-weight:normal;">$0.00</div>
<div class="t" style="left:1345.5px;top:594.26px;font-size:13.4px;color:#555;font-weight:normal;">Paid</div>
<div class="t" style="left:1428px;top:594.26px;font-size:13.4px;color:#555;font-weight:normal;letter-spacing:0.09px">07/10/2025 01:34pm</div>
<div class="t" style="left:1587px;top:594.26px;font-size:13.4px;color:#555;font-weight:normal;">No</div>
<svg class="ic" style="left:1835px;top:596.20px" width="4" height="12" viewBox="0 0 4 12"><circle cx="2" cy="1.5" r="1.15" fill="#333"/><circle cx="2" cy="5.5" r="1.15" fill="#333"/><circle cx="2" cy="9.5" r="1.15" fill="#333"/></svg>
<div style="position:absolute;left:270px;top:623.84px;width:1608px;height:45.14px;background:#fff"></div>
<div style="position:absolute;left:285px;top:637.44px;width:18px;height:18px;border:1px solid #cfd6de;border-radius:3px;background:#fff"></div>
<div class="t" style="left:319.4px;top:638.90px;font-size:13.4px;color:#555;font-weight:normal;">2020001199</div>
<div class="t" style="left:484px;top:638.90px;font-size:13.4px;color:#555;font-weight:normal;">10/02/2025</div>
<div class="badge" style="left:580px;top:637.14px;background:#6fd49b">SO AK1100</div>
<div class="t" style="left:763.4px;top:639.07px;font-size:13.2px;color:#3c7bc4;font-weight:normal;">A.A.C. Action Air Corp. (7469)</div>
<div class="t" style="left:1251px;top:638.90px;font-size:13.4px;color:#555;font-weight:normal;">$0.00</div>
<div class="badge" style="left:1346px;top:637.14px;background:#22c3c4">Open</div>
<div class="t" style="left:1587px;top:638.90px;font-size:13.4px;color:#555;font-weight:normal;">No</div>
<svg class="ic" style="left:1835px;top:640.84px" width="4" height="12" viewBox="0 0 4 12"><circle cx="2" cy="1.5" r="1.15" fill="#333"/><circle cx="2" cy="5.5" r="1.15" fill="#333"/><circle cx="2" cy="9.5" r="1.15" fill="#333"/></svg>
<div style="position:absolute;left:270px;top:668.48px;width:1608px;height:45.14px;background:#f4f4f6"></div>
<div style="position:absolute;left:285px;top:682.08px;width:18px;height:18px;border:1px solid #cfd6de;border-radius:3px;background:#fff"></div>
<div class="t" style="left:319.4px;top:683.54px;font-size:13.4px;color:#555;font-weight:normal;">WO-Test-2020001198</div>
<div class="t" style="left:484px;top:683.54px;font-size:13.4px;color:#555;font-weight:normal;">10/06/2025</div>
<div class="badge" style="left:580px;top:681.78px;background:#6aabea">WO FL202000095552D</div>
<div class="t" style="left:763.4px;top:683.71px;font-size:13.2px;color:#3c7bc4;font-weight:normal;">A &amp; Z Services, Inc.</div>
<div class="t" style="left:1036px;top:683.54px;font-size:13.4px;color:#555;font-weight:normal;">5555</div>
<div class="t" style="left:1251px;top:683.54px;font-size:13.4px;color:#555;font-weight:normal;">$0.00</div>
<div class="t" style="left:1345.5px;top:683.54px;font-size:13.4px;color:#555;font-weight:normal;">Paid</div>
<div class="t" style="left:1428px;top:683.54px;font-size:13.4px;color:#555;font-weight:normal;letter-spacing:0.09px">06/10/2025 10:32am</div>
<div class="t" style="left:1587px;top:683.54px;font-size:13.4px;color:#555;font-weight:normal;">No</div>
<svg class="ic" style="left:1835px;top:685.48px" width="4" height="12" viewBox="0 0 4 12"><circle cx="2" cy="1.5" r="1.15" fill="#333"/><circle cx="2" cy="5.5" r="1.15" fill="#333"/><circle cx="2" cy="9.5" r="1.15" fill="#333"/></svg>
<div style="position:absolute;left:270px;top:713.12px;width:1608px;height:45.14px;background:#fff"></div>
<div style="position:absolute;left:285px;top:726.72px;width:18px;height:18px;border:1px solid #cfd6de;border-radius:3px;background:#fff"></div>
<div class="t" style="left:319.4px;top:728.18px;font-size:13.4px;color:#555;font-weight:normal;">WO-Test-2020001197</div>
<div class="t" style="left:484px;top:728.18px;font-size:13.4px;color:#555;font-weight:normal;">10/06/2025</div>
<div class="badge" style="left:580px;top:726.42px;background:#6aabea">WO CA202000095555-1</div>
<div class="t" style="left:763.4px;top:728.35px;font-size:13.2px;color:#3c7bc4;font-weight:normal;">A &amp; Z Services, Inc.</div>
<div class="t" style="left:1036px;top:728.18px;font-size:13.4px;color:#555;font-weight:normal;">123456</div>
<div class="t" style="left:1251px;top:728.18px;font-size:13.4px;color:#555;font-weight:normal;">$0.00</div>
<div class="t" style="left:1345.5px;top:728.18px;font-size:13.4px;color:#555;font-weight:normal;">Paid</div>
<div class="t" style="left:1428px;top:728.18px;font-size:13.4px;color:#555;font-weight:normal;letter-spacing:0.09px">06/10/2025 10:30am</div>
<div class="t" style="left:1587px;top:728.18px;font-size:13.4px;color:#555;font-weight:normal;">No</div>
<svg class="ic" style="left:1835px;top:730.12px" width="4" height="12" viewBox="0 0 4 12"><circle cx="2" cy="1.5" r="1.15" fill="#333"/><circle cx="2" cy="5.5" r="1.15" fill="#333"/><circle cx="2" cy="9.5" r="1.15" fill="#333"/></svg>
<div style="position:absolute;left:270px;top:757.76px;width:1608px;height:45.14px;background:#f4f4f6"></div>
<div style="position:absolute;left:285px;top:771.36px;width:18px;height:18px;border:1px solid #cfd6de;border-radius:3px;background:#fff"></div>
<div class="t" style="left:319.4px;top:772.82px;font-size:13.4px;color:#555;font-weight:normal;">WO-Test-2020001196</div>
<div class="t" style="left:484px;top:772.82px;font-size:13.4px;color:#555;font-weight:normal;">10/06/2025</div>
<div class="badge" style="left:580px;top:771.06px;background:#6aabea">WO FL202000095554D</div>
<div class="t" style="left:763.4px;top:772.99px;font-size:13.2px;color:#3c7bc4;font-weight:normal;">A &amp; Z Services, Inc.</div>
<div class="t" style="left:1036px;top:772.82px;font-size:13.4px;color:#555;font-weight:normal;">123456</div>
<div class="t" style="left:1251px;top:772.82px;font-size:13.4px;color:#555;font-weight:normal;">$0.00</div>
<div class="t" style="left:1345.5px;top:772.82px;font-size:13.4px;color:#555;font-weight:normal;">Paid</div>
<div class="t" style="left:1428px;top:772.82px;font-size:13.4px;color:#555;font-weight:normal;letter-spacing:0.09px">06/10/2025 10:18am</div>
<div class="t" style="left:1587px;top:772.82px;font-size:13.4px;color:#555;font-weight:normal;">No</div>
<svg class="ic" style="left:1835px;top:774.76px" width="4" height="12" viewBox="0 0 4 12"><circle cx="2" cy="1.5" r="1.15" fill="#333"/><circle cx="2" cy="5.5" r="1.15" fill="#333"/><circle cx="2" cy="9.5" r="1.15" fill="#333"/></svg>
<div style="position:absolute;left:270px;top:802.40px;width:1608px;height:45.14px;background:#fff"></div>
<div style="position:absolute;left:285px;top:816.00px;width:18px;height:18px;border:1px solid #cfd6de;border-radius:3px;background:#fff"></div>
<div class="t" style="left:319.4px;top:817.46px;font-size:13.4px;color:#555;font-weight:normal;">2020001195</div>
<div class="t" style="left:484px;top:817.46px;font-size:13.4px;color:#555;font-weight:normal;">09/22/2025</div>
<div class="badge" style="left:580px;top:815.70px;background:#6fd49b">SO AK1096</div>
<div class="t" style="left:763.4px;top:817.63px;font-size:13.2px;color:#3c7bc4;font-weight:normal;">Mecanex</div>
<div class="t" style="left:1036px;top:817.46px;font-size:13.4px;color:#555;font-weight:normal;">Customer PO#</div>
<div class="t" style="left:1251px;top:817.46px;font-size:13.4px;color:#555;font-weight:normal;">$0.00</div>
<div class="badge" style="left:1346px;top:815.70px;background:#22c3c4">Open</div>
<div class="t" style="left:1587px;top:817.46px;font-size:13.4px;color:#555;font-weight:normal;">No</div>
<svg class="ic" style="left:1835px;top:819.40px" width="4" height="12" viewBox="0 0 4 12"><circle cx="2" cy="1.5" r="1.15" fill="#333"/><circle cx="2" cy="5.5" r="1.15" fill="#333"/><circle cx="2" cy="9.5" r="1.15" fill="#333"/></svg>
<div style="position:absolute;left:270px;top:847.04px;width:1608px;height:45.14px;background:#f4f4f6"></div>
<div style="position:absolute;left:285px;top:860.64px;width:18px;height:18px;border:1px solid #cfd6de;border-radius:3px;background:#fff"></div>
<div class="t" style="left:319.4px;top:862.10px;font-size:13.4px;color:#555;font-weight:normal;">WO-Test-2020001192</div>
<div class="t" style="left:484px;top:862.10px;font-size:13.4px;color:#555;font-weight:normal;">10/02/2025</div>
<div class="badge" style="left:580px;top:860.34px;background:#6aabea">WO FL202000095553</div>
<div class="t" style="left:763.4px;top:862.27px;font-size:13.2px;color:#3c7bc4;font-weight:normal;">A &amp; Z Services, Inc.</div>
<div class="t" style="left:1036px;top:862.10px;font-size:13.4px;color:#555;font-weight:normal;">3312213132</div>
<div class="t" style="left:1251px;top:862.10px;font-size:13.4px;color:#555;font-weight:normal;">$0.00</div>
<div class="badge" style="left:1346px;top:860.34px;background:#22c3c4">Open</div>
<div class="t" style="left:1428px;top:862.10px;font-size:13.4px;color:#555;font-weight:normal;letter-spacing:0.09px">01/10/2025 02:35pm</div>
<div class="t" style="left:1587px;top:862.10px;font-size:13.4px;color:#555;font-weight:normal;">No</div>
<svg class="ic" style="left:1835px;top:864.04px" width="4" height="12" viewBox="0 0 4 12"><circle cx="2" cy="1.5" r="1.15" fill="#333"/><circle cx="2" cy="5.5" r="1.15" fill="#333"/><circle cx="2" cy="9.5" r="1.15" fill="#333"/></svg>
<div style="position:absolute;left:270px;top:891.68px;width:1608px;height:45.14px;background:#fff"></div>
<div style="position:absolute;left:285px;top:905.28px;width:18px;height:18px;border:1px solid #cfd6de;border-radius:3px;background:#fff"></div>
<div class="t" style="left:319.4px;top:906.74px;font-size:13.4px;color:#555;font-weight:normal;">WO-Test-2020001191</div>
<div class="t" style="left:484px;top:906.74px;font-size:13.4px;color:#555;font-weight:normal;">09/30/2025</div>
<div class="badge" style="left:580px;top:904.98px;background:#6aabea">WO FL5</div>
<div class="t" style="left:763.4px;top:906.91px;font-size:13.2px;color:#3c7bc4;font-weight:normal;">Customer Company</div>
<div class="t" style="left:1036px;top:906.74px;font-size:13.4px;color:#555;font-weight:normal;">33121</div>
<div class="t" style="left:1251px;top:906.74px;font-size:13.4px;color:#555;font-weight:normal;">$0.00</div>
<div class="badge" style="left:1346px;top:904.98px;background:#22c3c4">Open</div>
<div class="t" style="left:1428px;top:906.74px;font-size:13.4px;color:#555;font-weight:normal;letter-spacing:0.09px">30/09/2025 05:53pm</div>
<div class="t" style="left:1587px;top:906.74px;font-size:13.4px;color:#555;font-weight:normal;">No</div>
<svg class="ic" style="left:1835px;top:908.68px" width="4" height="12" viewBox="0 0 4 12"><circle cx="2" cy="1.5" r="1.15" fill="#333"/><circle cx="2" cy="5.5" r="1.15" fill="#333"/><circle cx="2" cy="9.5" r="1.15" fill="#333"/></svg>
<div style="position:absolute;left:1797px;top:356px;width:1px;height:555px;background:#efeff1"></div>
<div class="ann" style="left:249px;top:82px;width:145px;height:66px"></div>
<div class="ann" style="left:241px;top:351px;width:1640px;height:50px"></div>
<div class="ann" style="left:5px;top:648px;width:246px;height:54px"></div>
<svg class="ic" style="left:1062px;top:409px" width="14" height="20" viewBox="0 0 14 20"><path d="M1.5 1.5 V16 L4.8 12.7 L7.2 18 L9.2 17.1 L6.9 11.8 H11.5 Z" fill="#fff" stroke="#111" stroke-width="1.1" stroke-linejoin="round"/></svg>
<div style="position:absolute;left:1830px;top:836px;width:53px;height:53px;border-radius:50%;background:#0b6db3;box-shadow:0 2px 8px rgba(0,0,0,0.2)"></div>
<svg class="ic" style="left:1844px;top:849px" width="24" height="28" viewBox="0 0 24 28"><path d="M3 1 H20 Q23 1 23 4 V25 L18 22 H4 Q1 22 1 19 V4 Q1 1 3 1 Z" fill="#fff"/><path d="M5.5 15 Q12 19 18.5 15" stroke="#0b6db3" stroke-width="1.6" fill="none"/></svg>
<div style="position:absolute;left:1905px;top:0;width:15px;height:911px;background:#2c2c2c"></div>
<div style="position:absolute;left:1908px;top:18px;width:9px;height:486px;background:#a3a3a3;border-radius:5px"></div>
<svg class="ic" style="left:1908px;top:4px" width="9" height="8" viewBox="0 0 9 8"><path d="M0 7 L4.5 1 L9 7 Z" fill="#a3a3a3"/></svg>
<svg class="ic" style="left:1908px;top:899px" width="9" height="8" viewBox="0 0 9 8"><path d="M0 1 L4.5 7 L9 1 Z" fill="#a3a3a3"/></svg>
</body></html>
